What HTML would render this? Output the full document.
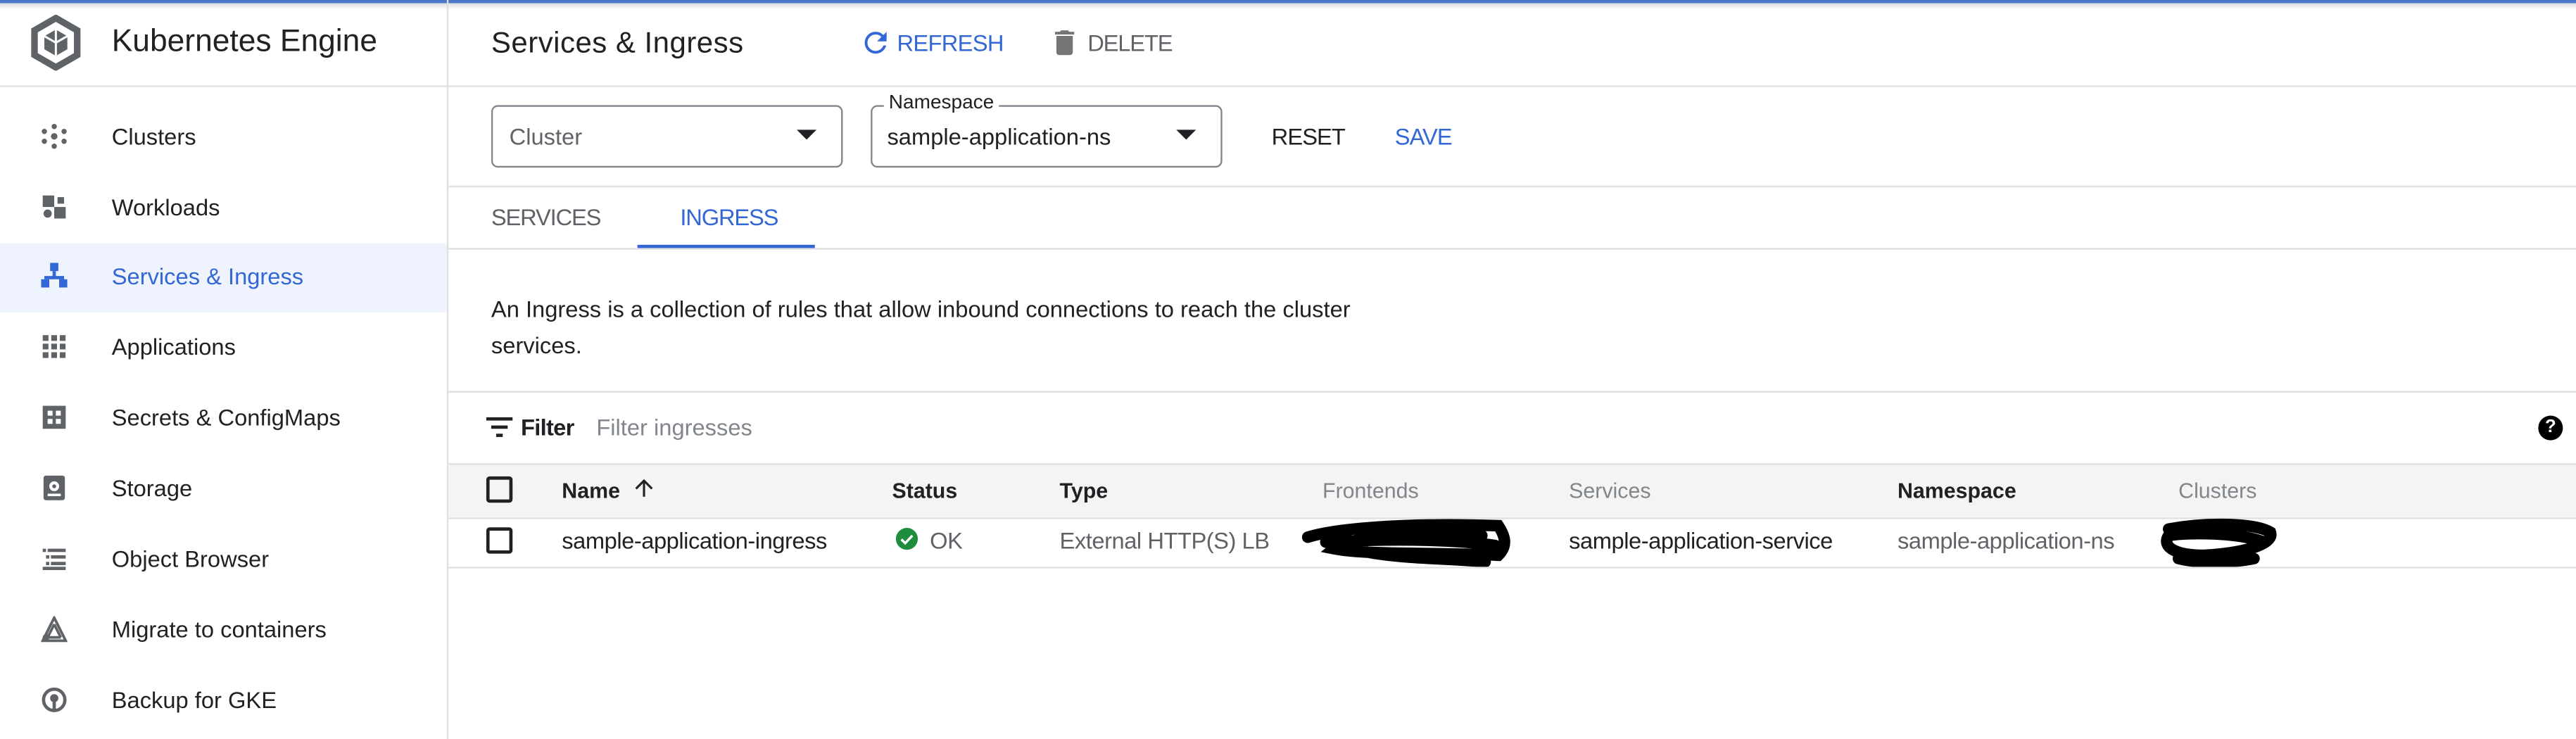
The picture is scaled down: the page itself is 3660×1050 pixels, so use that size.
<!DOCTYPE html>
<html><head><meta charset="utf-8"><style>
html,body{margin:0;padding:0;width:3660px;height:1050px;overflow:hidden;background:#fff}
#w{position:absolute;left:0;top:0;width:1568px;height:450px;transform:scale(2.3342);transform-origin:0 0;font-family:"Liberation Sans",Arial,sans-serif;color:#202124}
.a{position:absolute;white-space:nowrap}
.line{position:absolute;background:#e0e0e0}
.nav{position:absolute;left:68px;font-size:14px;color:#202124;line-height:16px}
.ic{position:absolute;left:25px}
.th{position:absolute;top:291px;font-size:13px;font-weight:bold;color:#202124}
.td{position:absolute;top:321px;font-size:14px;color:#202124;letter-spacing:-0.2px}
.cb{position:absolute;left:296px;width:12px;height:12px;border:2px solid #202124;border-radius:2px}
</style></head><body><div id="w">
<div class="a" style="left:0;top:0;width:1568px;height:2px;background:#4a78c9"></div>
<div class="a" style="left:0;top:2px;width:1568px;height:4px;background:linear-gradient(#ddd,#fff)"></div>
<div class="line" style="left:272px;top:0;width:1px;height:450px"></div>
<div class="line" style="left:0;top:52px;width:1568px;height:1px"></div>
<svg class="a" style="left:17px;top:9px" width="34" height="34" viewBox="0 0 34 34"><polygon points="17,2 30,9.5 30,24.5 17,32 4,24.5 4,9.5" fill="none" stroke="#5f6368" stroke-width="4"/><polygon points="17,9 24,13 24,21 17,25 10,21 10,13" fill="#5f6368"/><path d="M17 9v16M10 13l7 4 7-4" stroke="#fff" stroke-width="1.3" fill="none"/></svg>
<div class="a" style="left:68px;top:15px;font-size:19px">Kubernetes Engine</div>
<div class="a" style="left:0;top:148px;width:272px;height:42px;background:#eef3fd"></div>
<svg class="ic" style="top:75px" width="16" height="16"><g fill="#5f6368"><circle cx="8" cy="2" r="1.6"/><circle cx="8" cy="14" r="1.6"/><circle cx="2" cy="5" r="1.6"/><circle cx="14" cy="5" r="1.6"/><circle cx="2" cy="11" r="1.6"/><circle cx="14" cy="11" r="1.6"/><circle cx="8" cy="8" r="2"/></g></svg>
<div class="nav" style="top:75px">Clusters</div>
<svg class="ic" style="top:118px" width="16" height="16"><g fill="#5f6368"><rect x="1" y="1" width="7" height="7"/><rect x="10" y="2" width="4" height="4"/><circle cx="4" cy="12" r="2.5"/><rect x="8" y="8" width="7" height="7"/></g></svg>
<div class="nav" style="top:118px">Workloads</div>
<svg class="ic" style="top:160px" width="16" height="16"><g fill="#3367d6"><rect x="5.5" y="0" width="5" height="5"/><rect x="7" y="5" width="2" height="4"/><rect x="2" y="8" width="12" height="2"/><rect x="0" y="10" width="5" height="5"/><rect x="11" y="10" width="5" height="5"/></g></svg>
<div class="nav" style="top:160px;color:#3367d6">Services &amp; Ingress</div>
<svg class="ic" style="top:203px" width="16" height="16"><g fill="#5f6368"><rect x="1" y="1" width="3.5" height="3.5"/><rect x="6.2" y="1" width="3.5" height="3.5"/><rect x="11.4" y="1" width="3.5" height="3.5"/><rect x="1" y="6.2" width="3.5" height="3.5"/><rect x="6.2" y="6.2" width="3.5" height="3.5"/><rect x="11.4" y="6.2" width="3.5" height="3.5"/><rect x="1" y="11.4" width="3.5" height="3.5"/><rect x="6.2" y="11.4" width="3.5" height="3.5"/><rect x="11.4" y="11.4" width="3.5" height="3.5"/></g></svg>
<div class="nav" style="top:203px">Applications</div>
<svg class="ic" style="top:246px" width="16" height="16"><rect x="1" y="1" width="14" height="14" fill="#5f6368"/><g fill="#fff"><rect x="4" y="4" width="3" height="3"/><rect x="9" y="4" width="3" height="3"/><rect x="4" y="9" width="3" height="3"/><rect x="9" y="9" width="3" height="3"/></g></svg>
<div class="nav" style="top:246px">Secrets &amp; ConfigMaps</div>
<svg class="ic" style="top:289px" width="16" height="16"><rect x="1.5" y="0.5" width="13" height="15" rx="1.5" fill="#5f6368"/><circle cx="8" cy="7" r="3" fill="#fff"/><circle cx="8" cy="7" r="1.2" fill="#5f6368"/><rect x="4" y="11.5" width="8" height="1.5" fill="#fff"/></svg>
<div class="nav" style="top:289px">Storage</div>
<svg class="ic" style="top:332px" width="16" height="16"><g fill="#5f6368"><rect x="1" y="2" width="2" height="2"/><rect x="4" y="2" width="11" height="2"/><rect x="3" y="6" width="2" height="2"/><rect x="6" y="6" width="9" height="2"/><rect x="3" y="10" width="2" height="2"/><rect x="6" y="10" width="9" height="2"/><rect x="1" y="13" width="14" height="2"/></g></svg>
<div class="nav" style="top:332px">Object Browser</div>
<svg class="ic" style="top:375px" width="16" height="16"><path d="M8 1L15 15H1Z M8 5L4 13M8 5L12 13M4 13h8" fill="none" stroke="#5f6368" stroke-width="1.6"/><circle cx="3" cy="13" r="2" fill="#5f6368"/></svg>
<div class="nav" style="top:375px">Migrate to containers</div>
<svg class="ic" style="top:418px" width="16" height="16"><circle cx="8" cy="8" r="6.5" fill="none" stroke="#5f6368" stroke-width="2"/><circle cx="8" cy="7" r="2.5" fill="#5f6368"/><rect x="7" y="9" width="2" height="5" fill="#5f6368"/></svg>
<div class="nav" style="top:418px">Backup for GKE</div>
<div class="a" style="left:299px;top:16px;font-size:18px;letter-spacing:0.2px">Services &amp; Ingress</div>
<svg class="a" style="left:523px;top:16px" width="20" height="20" viewBox="0 0 24 24"><path d="M17.65 6.35A7.96 7.96 0 0 0 12 4a8 8 0 1 0 7.73 10h-2.08A6 6 0 1 1 12 6c1.66 0 3.14.69 4.22 1.78L13 11h7V4z" fill="#3367d6"/></svg>
<div class="a" style="left:546px;top:18px;font-size:14px;color:#3367d6;letter-spacing:-0.3px">REFRESH</div>
<svg class="a" style="left:638px;top:16px" width="20" height="20" viewBox="0 0 24 24"><path d="M6 19c0 1.1.9 2 2 2h8c1.1 0 2-.9 2-2V7H6zM19 4h-3.5l-1-1h-5l-1 1H5v2h14z" fill="#757575"/></svg>
<div class="a" style="left:662px;top:18px;font-size:14px;color:#5f6368;letter-spacing:-0.5px">DELETE</div>
<div class="a" style="left:299px;top:64px;width:212px;height:36px;border:1px solid #80868b;border-radius:4px"></div>
<div class="a" style="left:310px;top:75px;font-size:14px;color:#5f6368">Cluster</div>
<div class="a" style="left:485px;top:79px;width:0;height:0;border-left:6px solid transparent;border-right:6px solid transparent;border-top:6px solid #202124"></div>
<div class="a" style="left:530px;top:64px;width:212px;height:36px;border:1px solid #80868b;border-radius:4px"></div>
<div class="a" style="left:538px;top:55px;padding:0 3px;background:#fff;font-size:12px">Namespace</div>
<div class="a" style="left:540px;top:75px;font-size:14px">sample-application-ns</div>
<div class="a" style="left:716px;top:79px;width:0;height:0;border-left:6px solid transparent;border-right:6px solid transparent;border-top:6px solid #202124"></div>
<div class="a" style="left:774px;top:75px;font-size:14px;letter-spacing:-0.4px">RESET</div>
<div class="a" style="left:849px;top:75px;font-size:14px;color:#3367d6;letter-spacing:-0.4px">SAVE</div>
<div class="line" style="left:273px;top:113px;width:1295px;height:1px"></div>
<div class="a" style="left:299px;top:124px;font-size:14px;color:#5f6368;letter-spacing:-0.5px">SERVICES</div>
<div class="a" style="left:414px;top:124px;font-size:14px;color:#3367d6;letter-spacing:-0.5px">INGRESS</div>
<div class="a" style="left:388px;top:149px;width:108px;height:2px;background:#3367d6"></div>
<div class="line" style="left:273px;top:151px;width:1295px;height:1px"></div>
<div class="a" style="left:299px;top:177px;font-size:14px;line-height:22px;white-space:normal;width:540px">An Ingress is a collection of rules that allow inbound connections to reach the cluster services.</div>
<div class="line" style="left:273px;top:238px;width:1295px;height:1px"></div>
<svg class="a" style="left:295px;top:252px" width="18" height="16"><g fill="#202124"><rect x="1" y="2" width="16" height="2"/><rect x="4" y="7" width="10" height="2"/><rect x="7" y="12" width="4" height="2"/></g></svg>
<div class="a" style="left:317px;top:252px;font-size:14px;font-weight:bold;letter-spacing:-0.3px">Filter</div>
<div class="a" style="left:363px;top:252px;font-size:14px;color:#80868b">Filter ingresses</div>
<div class="a" style="left:1545px;top:253px;width:15px;height:15px;border-radius:50%;background:#000;color:#fff;font-size:11px;font-weight:bold;text-align:center;line-height:15px">?</div>
<div class="a" style="left:273px;top:282px;width:1295px;height:32px;background:#f4f4f4;border-top:1px solid #e0e0e0;border-bottom:1px solid #e0e0e0"></div>
<div class="cb" style="top:290px"></div>
<div class="th" style="left:342px">Name</div>
<svg class="a" style="left:384px;top:289px" width="16" height="16" viewBox="0 0 24 24"><path d="M4 12l1.41 1.41L11 7.83V20h2V7.83l5.58 5.59L20 12l-8-8z" fill="#202124"/></svg>
<div class="th" style="left:543px">Status</div>
<div class="th" style="left:645px">Type</div>
<div class="th" style="left:805px;color:#80868b;font-weight:normal">Frontends</div>
<div class="th" style="left:955px;color:#80868b;font-weight:normal">Services</div>
<div class="th" style="left:1155px">Namespace</div>
<div class="th" style="left:1326px;color:#80868b;font-weight:normal">Clusters</div>
<div class="cb" style="top:321px"></div>
<div class="td" style="left:342px">sample-application-ingress</div>
<svg class="a" style="left:544px;top:320px" width="16" height="16" viewBox="0 0 24 24"><circle cx="12" cy="12" r="10" fill="#1e8e3e"/><path d="M7 12.5l3.5 3.5L17 9" stroke="#fff" stroke-width="2.2" fill="none"/></svg>
<div class="td" style="left:566px;color:#5f6368">OK</div>
<div class="td" style="left:645px;color:#5f6368">External HTTP(S) LB</div>
<svg class="a" style="left:792px;top:314px" width="130" height="34"><path d="M4 13 C20 8 60 4 120 6 C124 12 126 18 120 24 C80 22 40 24 20 20 C30 12 70 10 110 12 M15 16 C50 14 90 14 118 18 M40 22 C60 26 90 26 112 28" stroke="#000" stroke-width="7" fill="none" stroke-linecap="round"/></svg>
<div class="td" style="left:955px">sample-application-service</div>
<div class="td" style="left:1155px;color:#5f6368">sample-application-ns</div>
<svg class="a" style="left:1312px;top:314px" width="75" height="34"><path d="M8 8 C30 4 60 4 70 10 C72 16 60 22 30 24 C10 24 4 18 8 12 C20 10 50 10 66 16 M14 26 C30 30 50 28 60 26" stroke="#000" stroke-width="7" fill="none" stroke-linecap="round"/></svg>
<div class="line" style="left:273px;top:345px;width:1295px;height:1px"></div>
</div></body></html>
